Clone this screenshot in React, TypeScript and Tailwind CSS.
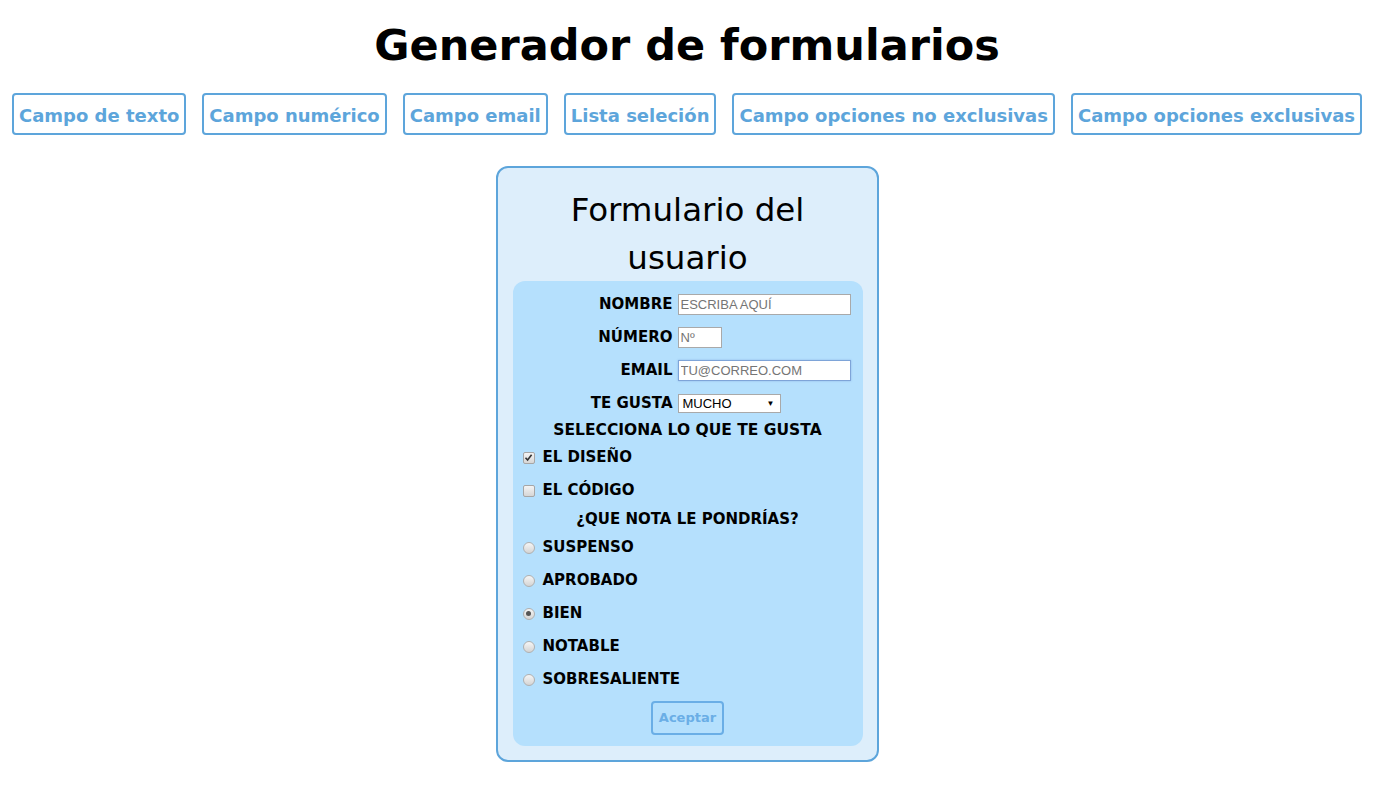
import React from "react";

const comic = "font-['Comic_Sans_MS','DejaVu_Sans',sans-serif]";

const botones = [
  "Campo de texto",
  "Campo numérico",
  "Campo email",
  "Lista seleción",
  "Campo opciones no exclusivas",
  "Campo opciones exclusivas",
];

const notas = ["SUSPENSO", "APROBADO", "BIEN", "NOTABLE", "SOBRESALIENTE"];

// casilla al estilo antiguo de Chrome
const Casilla = ({ marcada }: { marcada?: boolean }) => (
  <span className="flex h-[12px] w-[12px] items-center justify-center rounded-[2px] border border-[#a6a6a6] bg-gradient-to-b from-[#f4f4f4] to-[#d6d6d6]">
    {marcada && (
      <svg width="9" height="9" viewBox="0 0 9 9">
        <path d="M1.5 4.8 L3.6 7 L7.6 1.8" fill="none" stroke="#333" strokeWidth="1.6" />
      </svg>
    )}
  </span>
);

const Radio = ({ marcada }: { marcada?: boolean }) => (
  <span className="flex h-[12px] w-[12px] items-center justify-center rounded-full border border-[#b0b0b0] bg-gradient-to-b from-[#f6f6f6] to-[#d4d4d4]">
    {marcada && <span className="h-[5px] w-[5px] rounded-full bg-[#555]" />}
  </span>
);

const Fila = ({ label, children }: { label: string; children: React.ReactNode }) => (
  <div className="grid h-[33px] grid-cols-[160px_1fr] items-center gap-[5px]">
    <span className="text-right text-[15px] font-bold">{label}</span>
    <div className="flex items-center">{children}</div>
  </div>
);

export default function App() {
  return (
    <div className={`min-h-screen bg-white text-black ${comic}`}>
      <h1 className="pt-[10px] text-center text-[43px] font-bold leading-[70px]">Generador de formularios</h1>

      <div className="mt-[13px] flex justify-center gap-[16px]">
        {botones.map((b) => (
          <button
            key={b}
            className="h-[42px] whitespace-nowrap rounded-[4px] border-2 border-[#5da5db] bg-white px-[5px] pt-[3px] text-[18px] font-bold text-[#5da5db]"
          >
            {b}
          </button>
        ))}
      </div>

      <div className="mt-[31px] flex justify-center">
        <div className="w-[383px] rounded-[12px] border-2 border-[#5da5db] bg-[#ddeefb] pl-[15px] pr-[14px] pt-[18px] pb-[14px]">
          <h2 className="mb-[-1px] text-center text-[32.5px] leading-[48px]">
            Formulario del
            <br />
            usuario
          </h2>

          <form className="rounded-[12px] bg-[#b5e0fd] pt-[7px] pb-[11px]">
            <Fila label="NOMBRE">
              <input
                placeholder="ESCRIBA AQUÍ"
                className="h-[21px] w-[173px] border border-[#a9a9a9] bg-white px-[2px] font-['Liberation_Sans',Arial,sans-serif] text-[13px] placeholder:text-[#757575]"
              />
            </Fila>
            <Fila label="NÚMERO">
              <input
                placeholder="Nº"
                className="h-[21px] w-[44px] border border-[#a9a9a9] bg-white px-[2px] font-['Liberation_Sans',Arial,sans-serif] text-[13px] placeholder:text-[#757575]"
              />
            </Fila>
            <Fila label="EMAIL">
              <input
                placeholder="TU@CORREO.COM"
                className="h-[21px] w-[173px] border border-[#7ea4d8] bg-white px-[2px] font-['Liberation_Sans',Arial,sans-serif] text-[13px] shadow-[0_0_2px_#8fb6e8] placeholder:text-[#757575]"
              />
            </Fila>
            <Fila label="TE GUSTA">
              <div className="flex h-[19px] w-[103px] items-center justify-between border border-[#a9a9a9] bg-white pl-[4px] pr-[5px] font-['Liberation_Sans',Arial,sans-serif] text-[13px]">
                <span>MUCHO</span>
                <span className="text-[8px]">▼</span>
              </div>
            </Fila>

            <p className="flex h-[21px] items-center justify-center text-[15.5px] font-bold">SELECCIONA LO QUE TE GUSTA</p>
            <label className="flex h-[33px] items-center gap-[8px] pl-[10px] text-[15px] font-bold">
              <Casilla marcada />
              EL DISEÑO
            </label>
            <label className="flex h-[33px] items-center gap-[8px] pl-[10px] text-[15px] font-bold">
              <Casilla />
              EL CÓDIGO
            </label>

            <p className="flex h-[24px] items-center justify-center text-[15px] font-bold">¿QUE NOTA LE PONDRÍAS?</p>
            {notas.map((n) => (
              <label key={n} className="flex h-[33px] items-center gap-[8px] pl-[10px] text-[15px] font-bold">
                <Radio marcada={n === "BIEN"} />
                {n}
              </label>
            ))}

            <div className="mt-[5px] flex justify-center">
              <button
                type="button"
                className="h-[34px] rounded-[4px] border-2 border-[#6aaee6] px-[6px] text-[13px] font-bold text-[#6aaee6]"
              >
                Aceptar
              </button>
            </div>
          </form>
        </div>
      </div>
    </div>
  );
}
